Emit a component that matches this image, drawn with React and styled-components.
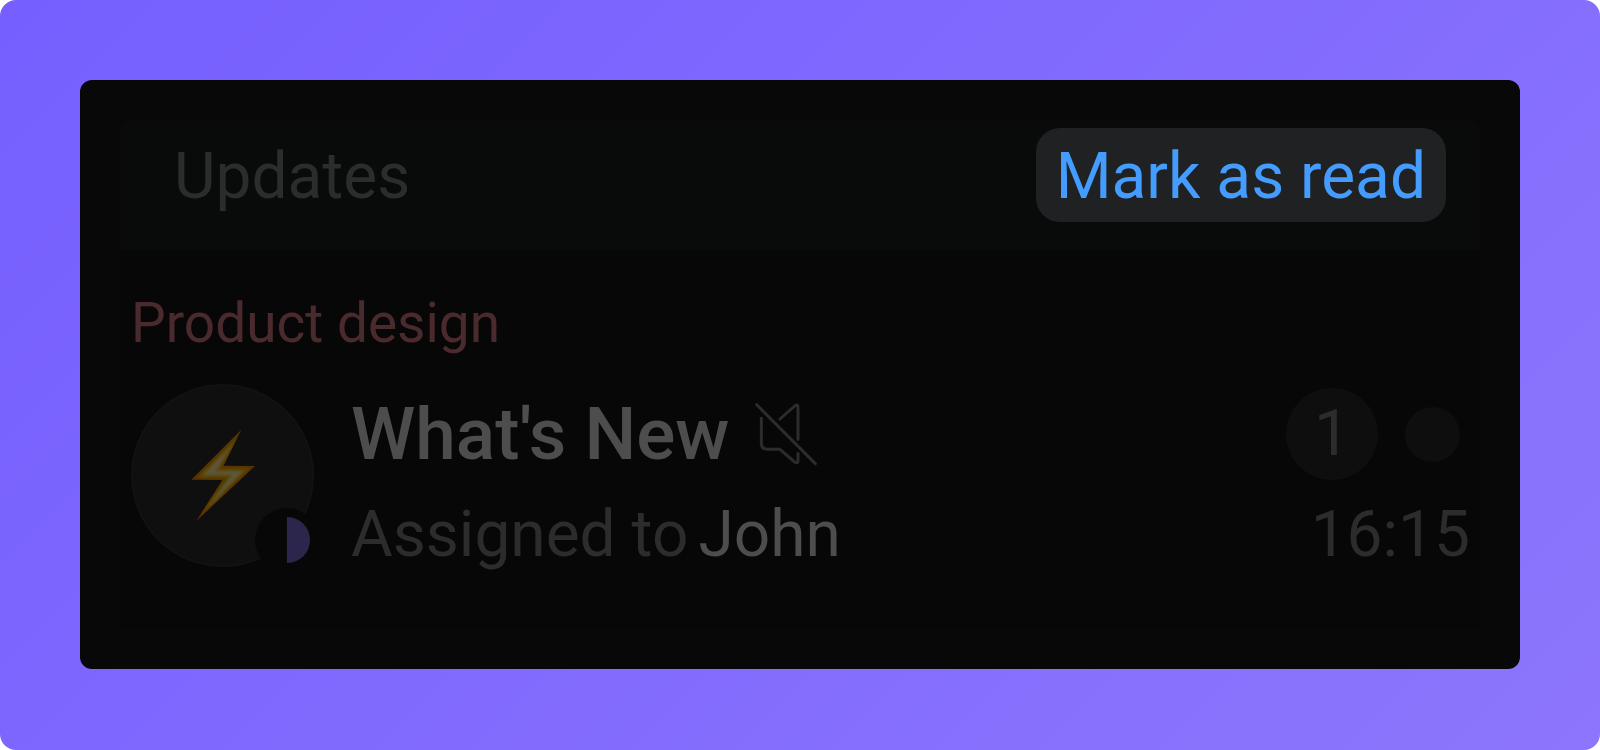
import React from 'react';
import styled, { createGlobalStyle } from 'styled-components';

const GlobalStyle = createGlobalStyle`
  * {
    box-sizing: border-box;
  }
  body {
    margin: 0;
    background: #ffffff;
    font-family: Roboto, 'Liberation Sans', sans-serif;
  }
`;

const Page = styled.main`
  min-height: 100vh;
  padding: 80px;
  border-radius: 16px;
  background: linear-gradient(135deg, #755fff 0%, #8d76fc 100%);
`;

const Panel = styled.section`
  padding: 40px;
  border-radius: 12px;
  background: #080808;
`;

const Header = styled.header`
  display: flex;
  align-items: flex-start;
  justify-content: space-between;
  padding: 8px 34px 28px 54px;
  border-radius: 8px 8px 0 0;
  background: #090b0a;
`;

const Title = styled.h1`
  margin: 0;
  padding-top: 4px;
  font-size: 64px;
  font-weight: 400;
  line-height: 90px;
  color: #2b2c2e;
`;

const ReadButton = styled.button`
  padding: 4px 20px 0;
  border: 0;
  border-radius: 24px;
  background: #202123;
  color: #449dfe;
  font-family: inherit;
  font-size: 64px;
  line-height: 90px;
  cursor: pointer;
`;

const Body = styled.div`
  padding: 40px 10px 45px 11px;
  border-radius: 0 0 8px 8px;
  background: #070707;
`;

const Category = styled.h2`
  margin: 0 0 28px;
  font-size: 55px;
  font-weight: 400;
  line-height: 66px;
  color: #4a2a2d;
`;

const Row = styled.article`
  display: flex;
  gap: 37px;
`;

const Avatar = styled.div`
  position: relative;
  display: flex;
  flex: none;
  align-items: center;
  justify-content: center;
  width: 183px;
  height: 183px;
  border: 2px solid #121212;
  border-radius: 50%;
  background: #0f0f0f;
`;

const Status = styled.span`
  position: absolute;
  right: -7px;
  bottom: -7px;
  padding: 9px;
  border-radius: 50%;
  background: #070707;

  &::before {
    content: '';
    display: block;
    width: 46px;
    height: 46px;
    border-radius: 50%;
    background: linear-gradient(90deg, #070707 50%, #2d264c 50%);
  }
`;

const Content = styled.div`
  flex: 1;
  min-width: 0;
`;

const Line = styled.div`
  display: flex;
  align-items: center;
  justify-content: space-between;
  height: 100px;
`;

const Name = styled.h3`
  display: flex;
  align-items: center;
  gap: 24px;
  margin: 0;
  font-size: 73px;
  font-weight: 500;
  color: #4d4d4d;
`;

const Message = styled.p`
  display: flex;
  gap: 10px;
  margin: 0;
  font-size: 64px;
  color: #2b2c2e;

  strong {
    font-weight: 400;
    color: #4d4d4d;
  }
`;

const Time = styled.time`
  font-size: 64px;
  color: #2b2c2e;
`;

const Badges = styled.div`
  display: flex;
  align-items: center;
  gap: 27px;
  padding-right: 10px;
`;

const Badge = styled.span`
  width: ${({ $size }) => $size}px;
  height: ${({ $size }) => $size}px;
  border-radius: 50%;
  background: #0e0e0e;
  color: #2b2c2e;
  font-size: 64px;
  line-height: ${({ $size }) => $size}px;
  text-align: center;
`;

const Bolt = () => (
  <svg width="64" height="92" viewBox="1 2 192 276" aria-hidden="true">
    <defs>
      <filter id="bolt-glow">
        <feGaussianBlur stdDeviation="2.5" />
      </filter>
      <clipPath id="bolt-shape">
        <path d="M152 1 99 109 193 110 17 275 95 152 2 151Z" />
      </clipPath>
    </defs>
    <g clipPath="url(#bolt-shape)">
      <path d="M0 0H194V278H0Z" fill="#573300" />
      <path
        d="M140 22 90 117 176 117 30 256 110 145 20 145Z"
        fill="#5a4700"
        filter="url(#bolt-glow)"
      />
      <path
        d="M126 44 76 125 158 125 48 238 122 137 36 137Z"
        fill="#5c5538"
        filter="url(#bolt-glow)"
      />
    </g>
  </svg>
);

const Muted = () => (
  <svg
    width="64"
    height="64"
    viewBox="0 0 192 192"
    fill="none"
    stroke="#2b2c2e"
    strokeWidth="9"
    strokeLinecap="round"
    strokeLinejoin="round"
    role="img"
    aria-label="Muted"
  >
    <path d="M8 8 184 185" />
    <path d="M22 49V123Q22 142 41 142H78L122 180Q132 187 132 175V154" />
    <path d="M78 51 122 12Q132 4 132 17V112" />
  </svg>
);

const App = () => (
  <>
    <GlobalStyle />
    <Page>
      <Panel>
        <Header>
          <Title>Updates</Title>
          <ReadButton type="button">Mark as read</ReadButton>
        </Header>
        <Body>
          <Category>Product design</Category>
          <Row>
            <Avatar>
              <Bolt />
              <Status />
            </Avatar>
            <Content>
              <Line>
                <Name>
                  What&apos;s New
                  <Muted />
                </Name>
                <Badges>
                  <Badge $size={92}>1</Badge>
                  <Badge $size={55} />
                </Badges>
              </Line>
              <Line>
                <Message>
                  Assigned to <strong>John</strong>
                </Message>
                <Time>16:15</Time>
              </Line>
            </Content>
          </Row>
        </Body>
      </Panel>
    </Page>
  </>
);

export default App;
